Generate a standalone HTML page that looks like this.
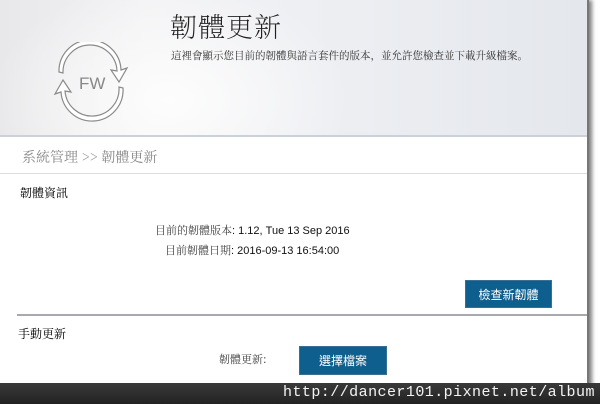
<!DOCTYPE html>
<html><head><meta charset="utf-8"><style>
*{margin:0;padding:0;box-sizing:border-box}
body{width:600px;height:404px;overflow:hidden;background:#fff;position:relative;font-family:"Liberation Sans","Noto Sans CJK TC",sans-serif}
.page{position:absolute;left:0;top:0;width:589px;height:404px;background:#fff;border-right:2px solid #777;box-shadow:3px 0 4px rgba(0,0,0,.5)}
.hdr{position:absolute;left:0;top:0;width:587px;height:137px;background:radial-gradient(ellipse 180px 120px at 170px 100px,#fdfdfd 0%,rgba(253,253,253,0) 100%),linear-gradient(90deg,#e8e8ea 0%,#f2f2f4 25%,#eceef2 60%,#e4e7ec 100%);border-bottom:2px solid #ccd0d8}
.t{position:absolute;font-family:"Noto Serif CJK SC","Noto Sans CJK TC",serif;}
.btn{position:absolute;background:#0e5f8e;color:#fff;font-size:12px;text-align:center;border:1px solid #3a6f94;font-family:"Noto Sans CJK TC",sans-serif}
.bar{position:absolute;left:0;top:383px;width:600px;height:21px;background:linear-gradient(#3a3a3a,#222)}
</style></head><body>
<div class="page">
<div class="hdr">
<svg style="position:absolute;left:45px;top:42px" width="92" height="80" viewBox="0 0 92 80">
<g fill="none" stroke="#8a8a8a" stroke-width="1.2">
<path d="M14 30 A30 30 0 0 1 76 28 L82 26 L74 40 L66 28 L72 29 A26 26 0 0 0 18 31 Z" fill="#fff"/>
<path d="M78 46 A30 30 0 0 1 16 50 L10 52 L18 38 L26 50 L20 49 A26 26 0 0 0 74 45 Z" fill="#fff"/>
</g>
<text x="34" y="47" font-size="17" fill="#888" font-family="Liberation Sans">FW</text>
</svg>
<div class="t" style="left:170px;top:6px;font-size:27px;color:#222;font-weight:200;letter-spacing:1px">韌體更新</div>
<div class="t" style="left:171px;top:48px;font-size:10.5px;color:#333">這裡會顯示您目前的韌體與語言套件的版本，並允許您檢查並下載升級檔案。</div>
</div>
<div class="t" style="left:22px;top:147px;font-size:14px;color:#888">系統管理 &gt;&gt; 韌體更新</div>
<div style="position:absolute;left:0;top:173px;width:587px;border-top:1px solid #ddd"></div>
<div class="t" style="left:20px;top:184px;font-size:12px;color:#000">韌體資訊</div>
<div style="position:absolute;left:155px;top:222px;font-size:11px;color:#111;white-space:nowrap"><span class="t" style="position:static;color:#444">目前的韌體版本</span>: 1.12, Tue 13 Sep 2016</div>
<div style="position:absolute;left:165px;top:242px;font-size:11px;color:#111;white-space:nowrap"><span class="t" style="position:static;color:#444">目前韌體日期</span>: 2016-09-13 16:54:00</div>
<div class="btn" style="left:465px;top:280px;width:87px;height:28px;line-height:27px">檢查新韌體</div>
<div style="position:absolute;left:17px;top:314px;width:570px;border-top:2px solid #a8a8b0"></div>
<div class="t" style="left:18px;top:325px;font-size:12px;color:#000">手動更新</div>
<div class="t" style="left:219px;top:351px;font-size:11px;color:#444">韌體更新:</div>
<div class="btn" style="left:299px;top:346px;width:88px;height:29px;line-height:28px">選擇檔案</div>
</div>
<div class="bar"></div>
<div style="position:absolute;left:283px;top:384px;font-family:'Liberation Mono',monospace;font-size:15px;color:#f4f4f4;letter-spacing:0.45px">http://dancer101.pixnet.net/album</div>
</body></html>
